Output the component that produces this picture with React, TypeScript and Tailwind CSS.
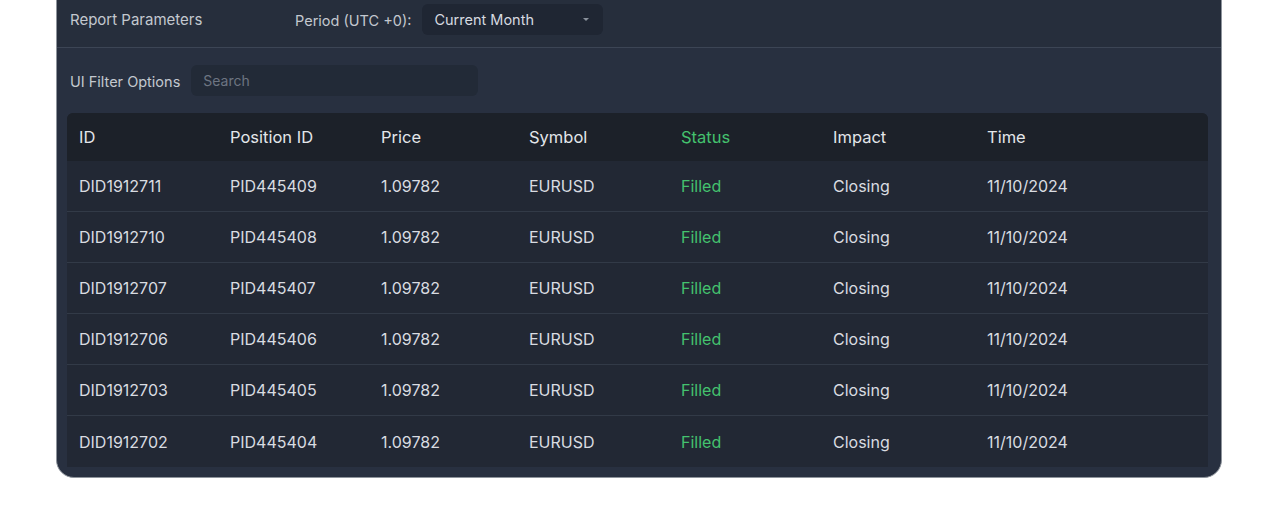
import React from 'react';

interface Deal {
  id: string;
  positionId: string;
  price: string;
  symbol: string;
  status: string;
  impact: string;
  time: string;
}

const deals: Deal[] = [
  { id: 'DID1912711', positionId: 'PID445409', price: '1.09782', symbol: 'EURUSD', status: 'Filled', impact: 'Closing', time: '11/10/2024' },
  { id: 'DID1912710', positionId: 'PID445408', price: '1.09782', symbol: 'EURUSD', status: 'Filled', impact: 'Closing', time: '11/10/2024' },
  { id: 'DID1912707', positionId: 'PID445407', price: '1.09782', symbol: 'EURUSD', status: 'Filled', impact: 'Closing', time: '11/10/2024' },
  { id: 'DID1912706', positionId: 'PID445406', price: '1.09782', symbol: 'EURUSD', status: 'Filled', impact: 'Closing', time: '11/10/2024' },
  { id: 'DID1912703', positionId: 'PID445405', price: '1.09782', symbol: 'EURUSD', status: 'Filled', impact: 'Closing', time: '11/10/2024' },
  { id: 'DID1912702', positionId: 'PID445404', price: '1.09782', symbol: 'EURUSD', status: 'Filled', impact: 'Closing', time: '11/10/2024' },
];

const cols = 'grid grid-cols-[151px_151px_148px_152px_152px_154px_1fr] px-3';

export default function App() {
  return (
    <div className="min-h-screen bg-white font-['Inter','Liberation_Sans',sans-serif]">
      <div className="ml-[56px] mr-[58px] -mt-4 overflow-hidden rounded-b-[18px] border border-[#8e949c] bg-[#283040]">
        {/* Report parameters */}
        <div className="flex h-[63px] items-end border-b border-[#3c4555] bg-[#262e3c] pb-[12px] pl-[13px]">
          <div className="flex h-[31px] items-center">
            <span className="w-[225px] pt-[2px] text-[15px] text-[#c3c8cf]">Report Parameters</span>
            <span className="mr-[11px] pt-[2px] text-[14.5px] text-[#c3c8cf]">Period (UTC +0):</span>
            <button className="flex h-[31px] w-[181px] items-center justify-between rounded-md bg-[#1f2633] pl-3 pr-[14px] text-[14.5px] leading-none text-[#d6dae0]">
              <span className="pt-px">Current Month</span>
              <svg width="6" height="4" viewBox="0 0 6 4"><path d="M0 0h6L3 3z" fill="#8a919c" /></svg>
            </button>
          </div>
        </div>

        <div className="pl-[10px] pr-[13px] pb-[10px]">
          {/* Filter */}
          <div className="flex h-[65px] items-center pl-[3px]">
            <span className="mr-[11px] pt-[3px] text-[14.5px] text-[#c3c8cf]">UI Filter Options</span>
            <input
              type="text"
              placeholder="Search"
              className="h-[31px] w-[287px] rounded-md bg-[#222a37] px-3 text-[14px] text-[#d6dae0] outline-none placeholder-[#6d7582]"
            />
          </div>

          {/* Table */}
          <div className="overflow-hidden rounded-t-md bg-[#222834]">
            <div className={`${cols} h-[48px] items-center bg-[#1c2129] pt-[1px] text-[16.5px] text-[#e3e6ea]`}>
              <span>ID</span>
              <span>Position ID</span>
              <span>Price</span>
              <span>Symbol</span>
              <span className="text-[#44c26e]">Status</span>
              <span>Impact</span>
              <span>Time</span>
            </div>
            {deals.map((deal, i) => (
              <div
                key={deal.id}
                className={`${cols} h-[51px] items-center text-[16px] text-[#d9dce1] ${i < deals.length - 1 ? 'border-b border-[#323a47]' : ''}`}
              >
                <span>{deal.id}</span>
                <span>{deal.positionId}</span>
                <span>{deal.price}</span>
                <span>{deal.symbol}</span>
                <span className="text-[#44c26e]">{deal.status}</span>
                <span>{deal.impact}</span>
                <span>{deal.time}</span>
              </div>
            ))}
          </div>
        </div>
      </div>
    </div>
  );
}
